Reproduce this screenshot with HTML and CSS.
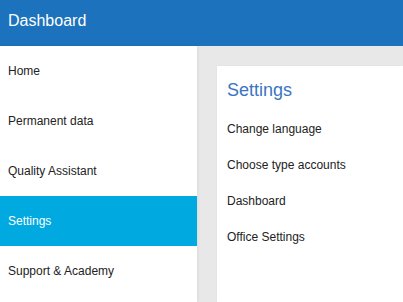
FILE: index.html
```html
<!DOCTYPE html>
<html>
<head>
<meta charset="utf-8">
<link rel="stylesheet" href="styles.css">
</head>
<body>
<header class="topbar">Dashboard</header>
<div class="layout">
  <nav class="sidebar">
    <div class="nav-item">Home</div>
    <div class="nav-item">Permanent data</div>
    <div class="nav-item">Quality Assistant</div>
    <div class="nav-item active">Settings</div>
    <div class="nav-item">Support &amp; Academy</div>
  </nav>
  <main class="content">
    <section class="card">
      <h1 class="card-title">Settings</h1>
      <ul class="links">
        <li>Change language</li>
        <li>Choose type accounts</li>
        <li>Dashboard</li>
        <li>Office Settings</li>
      </ul>
    </section>
  </main>
</div>
</body>
</html>
```
FILE: styles.css
```css
html, body {
  margin: 0;
  padding: 0;
  height: 100%;
  overflow: hidden;
  font-family: "Liberation Sans", Arial, sans-serif;
}
body {
  display: flex;
  flex-direction: column;
  background: #e8e8e8;
}
.topbar {
  height: 46px;
  box-sizing: border-box;
  background: #1c72bc;
  color: #fff;
  font-size: 16px;
  line-height: 21px;
  padding: 10px 0 0 8px;
  flex: none;
}
.layout {
  flex: 1;
  display: flex;
  min-height: 0;
}
.sidebar {
  width: 197px;
  flex: none;
  background: #fff;
  box-shadow: 1px 0 3px rgba(0,0,0,0.06);
  position: relative;
  z-index: 1;
}
.nav-item {
  height: 50px;
  line-height: 50px;
  padding-left: 8px;
  font-size: 12px;
  color: #222;
}
.nav-item.active {
  background: #00a9e0;
  color: #fff;
}
.content {
  flex: 1;
  padding: 20px 0 0 20px;
  min-width: 0;
}
.card {
  background: #fff;
  height: 100%;
  padding: 14px 0 0 10px;
  box-sizing: border-box;
  box-shadow: 0 0 2px rgba(0,0,0,0.05);
}
.card-title {
  margin: 0 0 10px 0;
  font-size: 18px;
  line-height: 21px;
  font-weight: normal;
  color: #3a74c4;
}
.links {
  list-style: none;
  margin: 0;
  padding: 0;
}
.links li {
  height: 36px;
  line-height: 36px;
  font-size: 12px;
  color: #222;
}
```
